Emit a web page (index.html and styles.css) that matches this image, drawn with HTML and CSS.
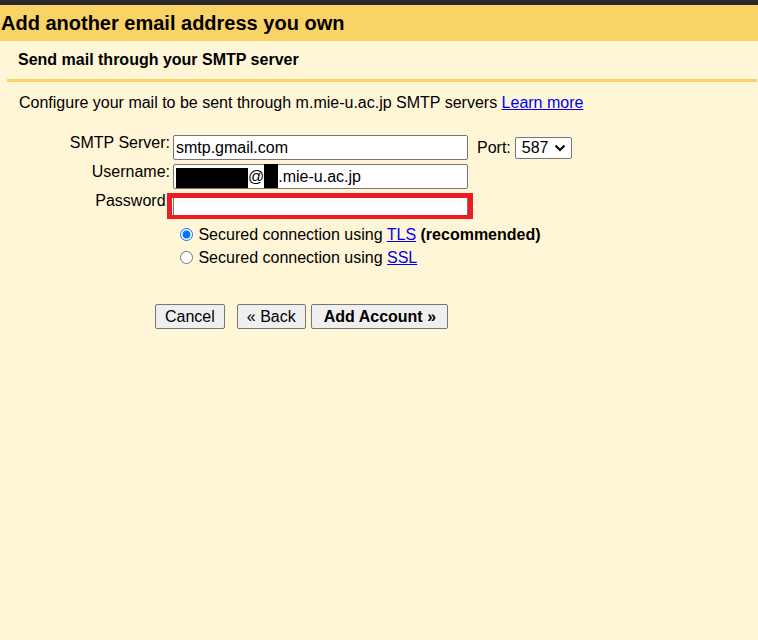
FILE: index.html
```html
<!DOCTYPE html>
<html>
<head>
<meta charset="utf-8">
<title>Add another email address you own</title>
<link rel="stylesheet" href="styles.css">
</head>
<body>
<div class="topbar"></div>
<div class="header"><h1 class="title">Add another email address you own</h1></div>
<div class="subhead">Send mail through your SMTP server</div>
<div class="rule"></div>
<p class="intro">Configure your mail to be sent through m.mie-u.ac.jp SMTP servers <a href="#" class="link">Learn more</a></p>

<div class="form">
  <label class="label">SMTP Server:</label>
  <div class="cell">
    <input class="input" type="text" value="smtp.gmail.com">
    <span class="port-label">Port:</span>
    <span class="select-wrap">
      <select class="select"><option>587</option><option>465</option></select>
      <svg class="chev" width="12" height="8" viewBox="0 0 12 8"><polyline points="1.5,1.5 6,6 10.5,1.5" fill="none" stroke="#000" stroke-width="2"/></svg>
    </span>
  </div>

  <label class="label">Username:</label>
  <div class="cell">
    <div class="input fake"><span class="redact r1"></span>@<span class="redact r2"></span>.mie-u.ac.jp</div>
  </div>

  <label class="label">Password:</label>
  <div class="cell">
    <span class="pw-wrap">
      <input class="input" type="password">
      <span class="highlight"></span>
    </span>
  </div>

  <div></div>
  <div class="cell radios">
    <div class="radio-row"><input type="radio" name="sec" class="radio" checked> Secured connection using <a href="#" class="link">TLS</a> <b>(recommended)</b></div>
    <div class="radio-row"><input type="radio" name="sec" class="radio"> Secured connection using <a href="#" class="link">SSL</a></div>
  </div>
</div>

<div class="buttons">
  <button class="btn">Cancel</button>
  <button class="btn back">« Back</button>
  <button class="btn primary">Add Account »</button>
</div>
</body>
</html>
```

FILE: styles.css
```css
html, body {
  margin: 0;
  padding: 0;
  background: #fff5d7;
  font-family: "Liberation Sans", Arial, sans-serif;
  color: #000;
  height: 100%;
}

.topbar {
  height: 5px;
  background: #282828;
}

.header {
  height: 36px;
  background: #fad366;
}

.title {
  margin: 0;
  padding-left: 1px;
  font-size: 20px;
  font-weight: bold;
  line-height: 36px;
}

.subhead {
  height: 38px;
  line-height: 38px;
  padding-left: 18px;
  font-size: 16px;
  font-weight: bold;
}

.rule {
  height: 3px;
  margin: 0 1px 0 7px;
  background: #fad366;
}

.intro {
  margin: 12px 0 0 19px;
  font-size: 16px;
  line-height: 18px;
}

.link {
  color: #0000ee;
  text-decoration: underline;
}

.form {
  display: grid;
  grid-template-columns: 173px auto;
  row-gap: 4px;
  margin-top: 23px;
  font-size: 16px;
}

.label {
  text-align: right;
  padding-right: 3px;
  line-height: 18px;
  margin-top: -1px;
}

.cell {
  display: flex;
  align-items: center;
}

.input {
  box-sizing: border-box;
  width: 295px;
  height: 25px;
  border: 1px solid #767676;
  border-radius: 2px;
  padding: 0 2px;
  margin: 0;
  background: #fff;
  font-family: "Liberation Sans", Arial, sans-serif;
  font-size: 16px;
  color: #000;
  outline: none;
}

.fake {
  display: flex;
  align-items: center;
  white-space: nowrap;
}

.redact {
  display: inline-block;
  background: #000;
}

.r1 {
  width: 72px;
  height: 20px;
  margin-top: 2px;
}

.r2 {
  width: 14px;
  height: 24px;
  margin-top: -1px;
}

.port-label {
  margin-left: 9px;
  margin-right: 4px;
}

.select-wrap {
  position: relative;
  display: inline-block;
}

.select {
  appearance: none;
  -webkit-appearance: none;
  box-sizing: border-box;
  width: 57px;
  height: 22px;
  border: 1px solid #767676;
  border-radius: 2px;
  background: #fff;
  padding: 0 0 0 6px;
  font-family: "Liberation Sans", Arial, sans-serif;
  font-size: 16px;
  color: #000;
}

.chev {
  position: absolute;
  right: 6px;
  top: 7px;
  pointer-events: none;
}

.pw-wrap {
  position: relative;
  display: inline-block;
  height: 25px;
}

.highlight {
  position: absolute;
  left: -6px;
  right: -5px;
  top: 0;
  bottom: -1px;
  border: 5px solid #ed1c24;
  border-bottom-width: 4px;
  pointer-events: none;
}

.radios {
  display: block;
  margin-top: 1px;
}

.radio-row {
  line-height: 23px;
  white-space: nowrap;
}

.radio {
  width: 13px;
  height: 13px;
  margin: 3px 1px 0 7px;
  vertical-align: -1px;
  accent-color: #0075ff;
}

.buttons {
  display: flex;
  margin: 35px 0 0 155px;
}

.btn {
  box-sizing: border-box;
  height: 25px;
  padding: 0 9px;
  border: 1px solid #767676;
  border-radius: 2px;
  background: #efefef;
  font-family: "Liberation Sans", Arial, sans-serif;
  font-size: 16px;
  color: #000;
}

.back {
  margin-left: 12px;
}

.primary {
  margin-left: 5px;
  font-weight: bold;
  padding: 0 11px 0 12px;
}
```
